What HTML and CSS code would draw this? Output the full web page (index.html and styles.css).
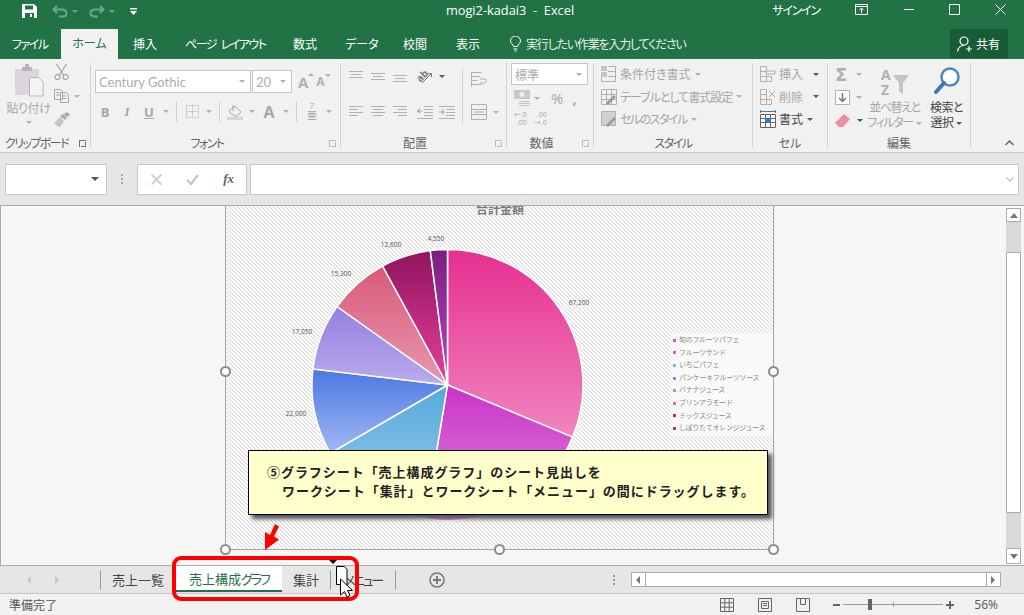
FILE: index.html
```html
<!DOCTYPE html>
<html lang="ja">
	<head>
		<meta charset="UTF-8" />
		<title>mogi2-kadai3 - Excel</title>
		<link rel="stylesheet" href="styles.css">
	</head>
	<body>
		<!-- icons -->
		<svg class="defs" width="0" height="0">
			<symbol id="i-top" viewBox="0 0 14 14"><path d="M0 2.5h14M2 5.5h10M0 8.5h14" /></symbol>
			<symbol id="i-mid" viewBox="0 0 14 14"><path d="M0 4.5h14M2 7.5h10M0 10.5h14" /></symbol>
			<symbol id="i-bot" viewBox="0 0 14 14"><path d="M0 6.5h14M2 9.5h10M0 12.5h14" /></symbol>
			<symbol id="i-left" viewBox="0 0 14 14"><path d="M0 1.5h14M0 4.5h9M0 7.5h14M0 10.5h9" /></symbol>
			<symbol id="i-center" viewBox="0 0 14 14"><path d="M0 1.5h14M2 4.5h10M0 7.5h14M2 10.5h10" /></symbol>
			<symbol id="i-right" viewBox="0 0 14 14"><path d="M0 1.5h14M5 4.5h9M0 7.5h14M5 10.5h9" /></symbol>
			<symbol id="i-outdent" viewBox="0 0 16 14"><path d="M7 1.5h9M7 4.5h9M7 7.5h9M7 10.5h9M0 13.5h16M0 6h6" /><path class="fill" d="M0 6l3-3v6z" /></symbol>
			<symbol id="i-indent" viewBox="0 0 16 14"><path d="M0 1.5h16M7 4.5h9M7 7.5h9M7 10.5h9M0 13.5h16M0 7h5" /><path class="fill" d="M6 7l-3-3v6z" /></symbol>
			<symbol id="i-table" viewBox="0 0 16 16"><path d="M.5.5h15v15H.5zM.5 5.5h15M.5 10.5h15M5.5.5v15M10.5.5v15" /></symbol>
		</svg>

		<div class="titlebar">
			<div class="qat">
				<svg class="qat-save" width="15" height="14" viewBox="0 0 15 14"><path fill="#fff" d="M0 0h12l3 3v11H0z" /><path fill="#217346" d="M3 1.5h8v4H3zM3 9h9v5H3z" /><path fill="#fff" d="M8 10h2v3H8z" /></svg>
				<svg class="qat-undo" width="16" height="13" viewBox="0 0 16 13"><path fill="none" stroke="#6fa58a" stroke-width="2" d="M5 1L1.500 4.500 5 8M2 4.500h8q4.500 0 4.500 3.500T10 11.500H7" /></svg>
				<span class="qat-caret"></span>
				<svg class="qat-undo" width="16" height="13" viewBox="0 0 16 13"><path fill="none" stroke="#6fa58a" stroke-width="2" d="M11 1l3.500 3.500L11 8M14 4.500H6Q1.500 4.500 1.500 8T6 11.500h3" /></svg>
				<span class="qat-caret"></span>
				<svg class="qat-more" width="7" height="7" viewBox="0 0 7 7"><path fill="#fff" d="M0 0h7v1.500H0zM0 3h7L3.500 7z" /></svg>
			</div>
			<div class="doc-title">mogi2-kadai3&nbsp; - &nbsp;Excel</div>
			<div class="win">
				<span class="signin">サインイン</span>
				<svg class="win-ribbon" width="13" height="11" viewBox="0 0 13 11"><path fill="none" stroke="#fff" d="M.5.5h12v10H.5zM.5 2.500h12M6.500 9V4.500M4.500 6l2-2 2 2" /></svg>
				<svg class="win-min" width="11" height="11" viewBox="0 0 11 11"><path stroke="#fff" d="M0 5.500h10" /></svg>
				<svg class="win-max" width="11" height="11" viewBox="0 0 11 11"><path fill="none" stroke="#fff" d="M.5.5h10v10H.5z" /></svg>
				<svg class="win-close" width="11" height="11" viewBox="0 0 11 11"><path stroke="#fff" d="M.5.500l10 10M10.500.500l-10 10" /></svg>
			</div>
		</div>

		<div class="tabs">
			<span class="tab tab-file">ファイル</span>
			<span class="tab tab-home">ホーム</span>
			<span class="tab tab-ins">挿入</span>
			<span class="tab tab-page">ページ レイアウト</span>
			<span class="tab tab-form">数式</span>
			<span class="tab tab-data">データ</span>
			<span class="tab tab-rev">校閲</span>
			<span class="tab tab-view">表示</span>
			<svg class="bulb" width="11" height="16" viewBox="0 0 11 16"><path fill="none" stroke="#fff" d="M3.500 10.500C3 8 .5 7.500.5 5a5 5 0 0 1 10 0c0 2.500-2.500 3-3 5.500zM3.500 13h4M4.500 15h2" /></svg>
			<span class="tell">実行したい作業を入力してください</span>
			<span class="share">
				<svg width="16" height="16" viewBox="0 0 16 16"><path fill="none" stroke="#fff" stroke-width="1.200" d="M7 1a3.800 3.800 0 0 1 0 8 3.800 3.800 0 0 1 0-8zM.6 15.500C1 12 3.500 9.500 7 9.500M9 13h6M12 10v6" /></svg>
				共有
			</span>
		</div>

		<div class="ribbon">
			<section class="group g-clip">
				<div class="body">
					<div class="paste">
						<svg width="30" height="33" viewBox="0 0 30 33"><path fill="#dcd6dc" d="M1 5h24v26H1z" /><path fill="#b9b3b9" d="M8 3h3V0h4v3h3v4H8z" /><path fill="#f4f4f4" stroke="#b5b5b5" d="M15.500 13.500h9l4.500 4.500v14H15.500z" /></svg>
						<span class="dim">貼り付け</span>
						<span class="caret caret-paste"></span>
					</div>
					<div class="clip-tools">
						<svg width="15" height="16" viewBox="0 0 15 16"><path fill="none" stroke="#a8a8a8" stroke-width="1.300" d="M2.500 0l7 11M12.500 0l-7 11M3.500 10.500a2.500 2.500 0 1 0 .1 0zM11.500 10.500a2.500 2.500 0 1 0 .1 0z" /></svg>
						<span class="row">
							<svg width="15" height="14" viewBox="0 0 15 14"><path fill="none" stroke="#a8a8a8" d="M.5.5h6l2 2v8H.5zM6.500 3.500h6l2 2v8h-8zM2 3.500h3M2 6h4M8.500 7h4M8.500 9.500h4" /></svg>
							<span class="caret caret-copy"></span>
						</span>
						<svg width="16" height="15" viewBox="0 0 16 15"><path fill="#c9c3c9" d="M0 11l6-6 4 4-4 6-3-1z" /><path fill="#a8a8a8" d="M6 4l3-2 4 4-2 2zM10 2l3-2 3 3-3 2z" /></svg>
					</div>
				</div>
				<div class="label has-launcher kana">クリップボード<span class="launcher launcher-dark"></span></div>
			</section>

			<section class="group g-font">
				<div class="body body-col">
					<div class="row font-row">
						<span class="combo combo-font">Century Gothic<i class="caret"></i></span>
						<span class="combo combo-size">20<i class="caret"></i></span>
						<span class="big-a a-up">A<i class="tri tri-up"></i></span>
						<span class="big-a a-down">A<i class="tri tri-down"></i></span>
					</div>
					<div class="row font-tools">
						<span class="tool t-b">B</span>
						<span class="tool t-i">I</span>
						<span class="tool t-u">U</span>
						<span class="cell"><i class="caret"></i></span>
						<span class="vsep"></span>
						<span class="tool"><svg width="13" height="13" viewBox="0 0 13 13"><path fill="none" stroke="#b0b0b0" stroke-dasharray="1 1" d="M.5.500h12v12H.5zM.5 6.500h12M6.500.500v12" /></svg></span>
						<span class="cell"><i class="caret"></i></span>
						<span class="vsep"></span>
						<span class="tool"><svg width="17" height="16" viewBox="0 0 17 16"><path fill="none" stroke="#a8a8a8" d="M2 7l6-5 6 6-4 4q-1 1-2 0L3 9zM6 1v6" /><path fill="#d9d4d9" d="M0 13h16v3H0z" /></svg></span>
						<span class="cell"><i class="caret"></i></span>
						<span class="tool t-a">A</span>
						<span class="cell"><i class="caret"></i></span>
						<span class="vsep"></span>
						<span class="tool t-phon">ア<b>亜</b></span>
						<span class="cell"><i class="caret"></i></span>
					</div>
				</div>
				<div class="label has-launcher kana">フォント<span class="launcher"></span></div>
			</section>

			<section class="group g-align">
				<div class="body">
					<div class="align-main">
						<div class="row align-top">
							<span class="tool"><svg class="ln" width="14" height="14"><use href="#i-top" /></svg></span>
							<span class="tool"><svg class="ln" width="14" height="14"><use href="#i-mid" /></svg></span>
							<span class="tool"><svg class="ln" width="14" height="14"><use href="#i-bot" /></svg></span>
							<span class="tool tool-gap"><svg class="open" width="16" height="16" viewBox="0 0 16 16"><text class="orient" transform="rotate(-45 6 9)" x="0" y="11">ab</text><path fill="none" stroke="#777" d="M5 15l9-9M11 5.500h3.500V9" /></svg></span>
							<span class="cell"><i class="caret caret-dark"></i></span>
						</div>
						<div class="row">
							<span class="tool"><svg class="ln" width="14" height="14"><use href="#i-left" /></svg></span>
							<span class="tool"><svg class="ln" width="14" height="14"><use href="#i-center" /></svg></span>
							<span class="tool"><svg class="ln" width="14" height="14"><use href="#i-right" /></svg></span>
							<span class="tool tool-gap"><svg class="ln" width="16" height="14"><use href="#i-outdent" /></svg></span>
							<span class="tool"><svg class="ln" width="16" height="14"><use href="#i-indent" /></svg></span>
						</div>
					</div>
					<span class="vsep vsep-tall"></span>
					<div class="align-side">
						<svg width="16" height="15" viewBox="0 0 16 15"><path fill="none" stroke="#b0b0b0" d="M.5.500h10M.5 4.500h9M.5 8.500h6M.5 12.500h10M.5.500v14M9 7h5q2 0 1 3l-1 1H9" /></svg>
						<span class="row">
							<svg width="16" height="16" viewBox="0 0 16 16"><path fill="none" stroke="#b0b0b0" d="M.5.500h15v15H.5zM.5 5.500h15M.5 10.500h15M3 8h10" /></svg>
							<span class="caret caret-merge"></span>
						</span>
					</div>
				</div>
				<div class="label has-launcher">配置<span class="launcher"></span></div>
			</section>

			<section class="group g-num">
				<div class="body body-col">
					<span class="combo combo-num">標準<i class="caret"></i></span>
					<div class="row num-row">
						<svg width="16" height="17" viewBox="0 0 16 17"><path fill="#c9c9c9" d="M0 0h16v9H0z" /><circle cx="8" cy="4.500" r="2.500" fill="#f1f1f1" /><path fill="none" stroke="#c4c4c4" d="M5 11.500h11M5 13.500h11M5 15.500h11" /></svg>
						<span class="caret caret-cur"></span>
						<span class="num-pct">%</span>
						<span class="num-comma">,</span>
					</div>
					<div class="row dec-row">
						<span class="dec">←.0<br>.00</span>
						<span class="dec">.00<br>→.0</span>
					</div>
				</div>
				<div class="label has-launcher">数値<span class="launcher"></span></div>
			</section>

			<section class="group g-style">
				<div class="body body-col">
					<div class="line"><svg width="16" height="16" viewBox="0 0 16 16"><path fill="#c4c4c4" d="M0 0h6v5H0zM0 6h6v5H0z" /><path fill="none" stroke="#b0b0b0" d="M7.500.500h7v15h-14v-4M7 5.500h8M7 10.500h8" /></svg><span class="dim">条件付き書式</span><i class="caret"></i></div>
					<div class="line"><svg width="16" height="16" viewBox="0 0 16 16"><use href="#i-table" class="ln" /><path fill="#9a9a9a" d="M5 14L13 6l2 2-8 8z" /></svg><span class="dim tight">テーブルとして書式設定</span><i class="caret"></i></div>
					<div class="line"><svg width="16" height="16" viewBox="0 0 16 16"><path fill="#d0d0d0" stroke="#b0b0b0" d="M.5.500h14v14H.5z" /><path fill="#9a9a9a" d="M5 14L13 6l2 2-8 8z" /></svg><span class="dim kana">セルのスタイル</span><i class="caret"></i></div>
				</div>
				<div class="label kana">スタイル</div>
			</section>

			<section class="group g-cell">
				<div class="body body-col">
					<div class="line"><svg width="16" height="16" viewBox="0 0 16 16"><path fill="none" stroke="#b0b0b0" d="M.5.500h6v5h-6zM.5 5.500h6v5h-6zM.5 10.500h6v5h-6zM6.500 10.500h5v5h-5zM6 5h9v3H6z" /></svg><span class="dim">挿入</span><i class="caret caret-dark caret-end"></i></div>
					<div class="line"><svg width="16" height="16" viewBox="0 0 16 16"><path fill="none" stroke="#b0b0b0" d="M.5.500h6v5h-6zM.5 5.500h6v5h-6zM.5 10.500h6v5h-6zM6.500 10.500h5v5h-5zM9 2l6 6M15 2l-6 6" /></svg><span class="dim">削除</span><i class="caret caret-dark caret-end"></i></div>
					<div class="line"><svg width="16" height="18" viewBox="0 0 16 18"><path fill="#fff" stroke="#666" d="M.5 4.500h15v13H.5zM.5 8.500h15M.5 12.500h15M5.500 4.500v13M10.500 4.500v13" /><path fill="#3a78c2" d="M5 8h6v5H5z" /><path stroke="#3a78c2" d="M0 1.500h16M.5 0v3M15.500 0v3" /></svg><span class="dark">書式</span><i class="caret caret-dark"></i></div>
				</div>
				<div class="label">セル</div>
			</section>

			<section class="group g-edit">
				<div class="body">
					<div class="edit-small">
						<span class="row"><span class="sigma">Σ</span><i class="caret"></i></span>
						<span class="row"><svg width="15" height="15" viewBox="0 0 15 15"><path fill="#fff" stroke="#b0b0b0" d="M.5.500h14v14H.5z" /><path fill="none" stroke="#777" stroke-width="1.500" d="M7.500 3v8M4 8l3.500 3.500L11 8" /></svg><i class="caret"></i></span>
						<span class="row"><svg width="15" height="13" viewBox="0 0 15 13"><path fill="#ec8ea2" d="M9 0l6 5-7 8H4L0 9z" /></svg><i class="caret caret-dark caret-erase"></i></span>
					</div>
					<div class="big sort">
						<svg class="open" width="30" height="30" viewBox="0 0 30 30"><text class="sort-a" x="1" y="13">A</text><text class="sort-a" x="1" y="28">Z</text><path fill="#c4c4c4" d="M13 8h16l-6 8v11l-4-3v-8z" /></svg>
						<span class="dim">並べ替えと</span>
						<span class="dim">フィルター<i class="caret"></i></span>
					</div>
					<div class="big find">
						<svg width="28" height="30" viewBox="0 0 28 30"><circle cx="17" cy="10" r="8.500" fill="#fff" stroke="#4f86c0" stroke-width="2.500" /><path stroke="#3c76b5" stroke-width="4" stroke-linecap="round" d="M11 16l-8 9" /></svg>
						<span class="dark">検索と</span>
						<span class="dark">選択<i class="caret caret-dark"></i></span>
					</div>
				</div>
				<div class="label">編集</div>
			</section>

			<svg class="collapse" width="9" height="6" viewBox="0 0 9 6"><path fill="none" stroke="#666" stroke-width="1.500" d="M.5 5l4-4 4 4" /></svg>
		</div>

		<div class="formula">
			<div class="namebox"><i class="caret caret-dark"></i></div>
			<span class="grip"></span>
			<div class="fx-btns">
				<svg width="11" height="11" viewBox="0 0 11 11"><path stroke="#c4c4c4" stroke-width="1.500" d="M.5.500l10 10M10.500.500l-10 10" /></svg>
				<svg width="13" height="11" viewBox="0 0 13 11"><path fill="none" stroke="#c4c4c4" stroke-width="2.200" d="M1 6l4 4 7-9" /></svg>
				<span class="fx">fx</span>
			</div>
			<div class="fx-input"><svg width="8" height="5" viewBox="0 0 8 5"><path fill="none" stroke="#c4c4c4" stroke-width="1.500" d="M.5.500L4 4 7.500.500" /></svg></div>
		</div>

		<main class="sheet">
			<div class="chart">
				<svg class="pie" width="547" height="344" viewBox="0 0 547 344">
					<defs>
						<linearGradient id="s1" x2="0" y2="1"><stop offset="0" stop-color="#e62f90" /><stop offset="1" stop-color="#f186bf" /></linearGradient>
						<linearGradient id="s2" x2="0" y2="1"><stop offset="0" stop-color="#cb33c8" /><stop offset="1" stop-color="#dd85de" /></linearGradient>
						<linearGradient id="s3" x2="0" y2="1"><stop offset="0" stop-color="#56a9da" /><stop offset="1" stop-color="#9ccfee" /></linearGradient>
						<linearGradient id="s4" x2="0" y2="1"><stop offset="0" stop-color="#4a78e4" /><stop offset="1" stop-color="#a2b8f2" /></linearGradient>
						<linearGradient id="s5" x2="0" y2="1"><stop offset="0" stop-color="#957fe0" /><stop offset="1" stop-color="#b9aceb" /></linearGradient>
						<linearGradient id="s6" x2="0" y2="1"><stop offset="0" stop-color="#d9597b" /><stop offset="1" stop-color="#e799af" /></linearGradient>
						<linearGradient id="s7" x2="0" y2="1"><stop offset="0" stop-color="#8f155f" /><stop offset="1" stop-color="#e6409c" /></linearGradient>
						<linearGradient id="s8" x2="0" y2="1"><stop offset="0" stop-color="#78207e" /><stop offset="1" stop-color="#c23fc4" /></linearGradient>
					</defs>
					<text class="chart-title" x="274" y="9">合計金額</text>
					<g class="slices">
						<path fill="url(#s1)" d="M221.500 180V44.500A135.500 135.500 0 0 1 346.600 232.100z" />
						<path fill="url(#s2)" d="M221.500 180L346.600 232.100A135.500 135.500 0 0 1 199.400 313.700z" />
						<path fill="url(#s3)" d="M221.500 180L199.400 313.700A135.500 135.500 0 0 1 104.400 248.200z" />
						<path fill="url(#s4)" d="M221.500 180L104.400 248.200A135.500 135.500 0 0 1 86.950 163.960z" />
						<path fill="url(#s5)" d="M221.500 180L86.950 163.960A135.500 135.500 0 0 1 111.050 101.500z" />
						<path fill="url(#s6)" d="M221.500 180L111.050 101.500A135.500 135.500 0 0 1 156.600 61z" />
						<path fill="url(#s7)" d="M221.500 180L156.600 61A135.500 135.500 0 0 1 204.300 45.600z" />
						<path fill="url(#s8)" d="M221.500 180L204.300 45.600A135.500 135.500 0 0 1 221.500 44.500z" />
					</g>
					<g class="values">
						<text x="353" y="100">67,200</text>
						<text x="210" y="36">4,550</text>
						<text x="165" y="42">12,600</text>
						<text x="115" y="71">15,300</text>
						<text x="76" y="129">17,050</text>
						<text x="70" y="211">22,000</text>
					</g>
				</svg>
				<ul class="legend">
					<li><i class="k1"></i>旬のフルーツパフェ</li>
					<li><i class="k2"></i>フルーツサンド</li>
					<li><i class="k3"></i>いちごパフェ</li>
					<li><i class="k4"></i>パンケーキフルーツソース</li>
					<li><i class="k5"></i>バナナジュース</li>
					<li><i class="k6"></i>プリンアラモード</li>
					<li><i class="k7"></i>ミックスジュース</li>
					<li><i class="k8"></i>しぼりたてオレンジジュース</li>
				</ul>
			</div>
			<span class="handle h-l"></span>
			<span class="handle h-r"></span>
			<span class="handle h-bl"></span>
			<span class="handle h-b"></span>
			<span class="handle h-br"></span>

			<div class="callout">
				<p>⑤グラフシート「売上構成グラフ」のシート見出しを</p>
				<p class="indent">ワークシート「集計」とワークシート「メニュー」の間にドラッグします。</p>
			</div>

			<svg class="arrow" width="16" height="26" viewBox="0 0 16 26"><path fill="#f00" d="M11 0l4 2.500-5 10 5 3L1 26 1 8l5 3z" /></svg>

			<div class="vscroll">
				<span class="sb-btn"><i class="tri-btn-up"></i></span>
				<span class="sb-thumb"></span>
				<span class="sb-btn sb-down"><i class="tri-btn-down"></i></span>
			</div>
		</main>

		<div class="sheetbar">
			<span class="nav">
				<i class="nav-l"></i>
				<i class="nav-r"></i>
			</span>
			<span class="vsep vsep-sheet"></span>
			<span class="sheet-tab">売上一覧</span>
			<span class="sheet-tab active">売上構成<span class="tab-kana">グラフ</span></span>
			<span class="sheet-tab">集計</span>
			<span class="vsep vsep-sheet"></span>
			<span class="sheet-tab tab-menu"><span class="tab-kana">メニュー</span></span>
			<span class="vsep vsep-sheet"></span>
			<svg class="add" width="16" height="16" viewBox="0 0 16 16"><circle cx="8" cy="8" r="7" fill="none" stroke="#777" stroke-width="1.500" /><path stroke="#777" stroke-width="1.800" d="M8 4v8M4 8h8" /></svg>
			<span class="dots"></span>
			<div class="hscroll">
				<span class="hs-btn"><i class="nav-l nav-dark"></i></span>
				<span class="hs-thumb"></span>
				<span class="hs-btn"><i class="nav-r nav-dark"></i></span>
			</div>
		</div>

		<footer class="status">
			<span>準備完了</span>
			<div class="status-right">
				<svg width="14" height="14" viewBox="0 0 14 14"><path fill="none" stroke="#666" d="M.5.500h13v13H.5zM.5 4.800h13M.5 9.200h13M4.800.500v13M9.200.500v13" /></svg>
				<svg width="14" height="14" viewBox="0 0 14 14"><path fill="none" stroke="#666" d="M.5.500h13v13H.5zM3.500 3.500h7v7h-7zM5 5.500h4M5 7.500h4" /></svg>
				<svg width="14" height="14" viewBox="0 0 14 14"><path fill="none" stroke="#666" d="M.5.500h13v13H.5zM4.500.500v6h5v-6" /></svg>
				<div class="zoom">
					<b class="z-minus"></b>
					<span class="z-track"><i class="z-thumb"></i><i class="z-tick"></i></span>
					<b class="z-plus"></b>
				</div>
				<span class="z-val">56%</span>
			</div>
		</footer>

		<!-- drag overlay -->
		<div class="redbox"></div>
		<span class="drop-mark"></span>
		<svg class="cursor" width="20" height="32" viewBox="0 0 20 32">
			<path fill="#fff" stroke="#000" d="M1.500.500h8l2.500 3v15h-10.500z" />
			<path fill="#fff" stroke="#000" d="M5.500 13v16l4-3.500 2.500 5.500 3-1.500-2.500-5h5z" />
		</svg>
	</body>
</html>
```

FILE: styles.css
```css
* {
	margin: 0;
	padding: 0;
	box-sizing: border-box;
	list-style: none;
}

html,
body {
	width: 1024px;
	height: 615px;
	overflow: hidden;
}

body {
	position: relative;
	display: flex;
	flex-direction: column;
	font-family: "Open Sans", "Noto Sans CJK JP", sans-serif;
	font-size: 12px;
	font-feature-settings: "palt";
	background: #f1f1f1;
	color: #444;
}

i {
	font-style: normal;
}

.defs {
	position: absolute;
}

.open {
	overflow: visible;
}

.row {
	display: flex;
	align-items: center;
}

.kana {
	letter-spacing: -1.500px;
}

.tight {
	letter-spacing: -1px;
}

/* タイトルバー */
.titlebar {
	display: grid;
	grid-template-columns: 1fr auto 1fr;
	height: 29px;
	padding-bottom: 7px;
	background: #217346;
	color: #fff;
	align-items: center;
}

.qat {
	display: flex;
	align-items: center;
	padding-left: 22px;
}

.qat-undo {
	margin-left: 15px;
}

.qat-caret {
	width: 0;
	height: 0;
	margin-left: 4px;
	border: 3px solid transparent;
	border-top: 3px solid #6fa58a;
	border-bottom: 0;
}

.qat-undo + .qat-caret + .qat-undo {
	margin-left: 11px;
}

.qat-more {
	margin-left: 15px;
}

.doc-title {
	margin: -2px 4px 0 0;
	font-size: 12.800px;
}

.win {
	display: flex;
	align-items: center;
	justify-content: flex-end;
	margin-top: -3px;
	padding-right: 18px;
}

.signin {
	margin-right: 35px;
	letter-spacing: -1.200px;
}

.win-min {
	margin-left: 36px;
}

.win-max {
	margin-left: 34px;
}

.win-close {
	margin-left: 35px;
}

/* タブ */
.tabs {
	display: flex;
	align-items: center;
	height: 30px;
	background: #217346;
	color: #fff;
	position: relative;
}

.tab {
	flex: none;
}

.tab-file {
	margin-left: 12px;
	width: 49px;
	letter-spacing: -1.500px;
}

.tab-home {
	width: 57px;
	height: 30px;
	line-height: 30px;
	text-align: center;
	background: #f1f1f1;
	color: #217346;
}

.tab-ins {
	margin-left: 15px;
	width: 52px;
}

.tab-page {
	width: 108px;
	letter-spacing: -1.500px;
	word-spacing: 3px;
}

.tab-form {
	width: 52px;
}

.tab-data {
	width: 58px;
}

.tab-rev {
	width: 53px;
}

.tab-view {
	width: 54px;
}

.bulb {
	margin-right: 5px;
}

.tell {
	color: #e6f0ea;
	letter-spacing: -1.200px;
}

.share {
	display: flex;
	align-items: center;
	gap: 3px;
	position: absolute;
	left: 950px;
	top: 0;
	width: 58px;
	height: 29px;
	padding-left: 7px;
	background: #185c37;
}

/* リボン */
.ribbon {
	display: flex;
	height: 94px;
	padding-top: 4px;
	background: #f1f1f1;
	border-bottom: 1px solid #c6c6c6;
	position: relative;
}

.group {
	display: flex;
	flex-direction: column;
	flex: none;
	height: 85px;
	border-right: 1px solid #d4d4d4;
	position: relative;
}

.body {
	display: flex;
	flex: none;
	height: 73px;
}

.body-col {
	flex-direction: column;
}

.label {
	position: relative;
	height: 12px;
	line-height: 15px;
	text-align: center;
	color: #666;
}

.has-launcher {
	padding-right: 17px;
}

.launcher {
	position: absolute;
	right: 4px;
	top: 4px;
	width: 7px;
	height: 7px;
	border: solid #bbb;
	border-width: 1px 0 0 1px;
}

.launcher::after {
	content: "";
	position: absolute;
	right: 0;
	bottom: 0;
	width: 4px;
	height: 4px;
	border: solid #bbb;
	border-width: 0 1px 1px 0;
}

.launcher-dark,
.launcher-dark::after {
	border-color: #777;
}

.dim {
	color: #a6a6a6;
}

.dark {
	color: #444;
}

.caret {
	display: inline-block;
	width: 0;
	height: 0;
	border: 3px solid transparent;
	border-top: 3px solid #b0b0b0;
	border-bottom: 0;
}

.caret-dark {
	border-top-color: #555;
}

.tool {
	display: flex;
	flex: none;
	align-items: center;
	justify-content: center;
	width: 22px;
	height: 18px;
	color: #a6a6a6;
}

.tool-gap {
	margin-left: 3px;
}

.cell {
	display: flex;
	flex: none;
	align-items: center;
	justify-content: center;
	width: 12px;
}

.vsep {
	flex: none;
	width: 1px;
	height: 21px;
	margin: 0 4px;
	background: #d0d0d0;
}

.ln {
	fill: none;
	stroke: #b0b0b0;
}

.ln .fill,
.fill {
	fill: #b0b0b0;
	stroke: none;
}

/* クリップボード */
.g-clip {
	width: 91px;
}

.paste {
	display: flex;
	flex-direction: column;
	align-items: center;
	width: 54px;
	padding: 1px 0 0 3px;
}

.paste .dim {
	margin-top: 3px;
	line-height: 17px;
	letter-spacing: -0.400px;
}

.caret-paste {
	margin-top: 4px;
}

.clip-tools {
	display: flex;
	flex-direction: column;
	gap: 9px;
	padding-top: 1px;
}

.caret-copy {
	margin-left: 5px;
}

/* フォント */
.g-font {
	width: 250px;
}

.g-font .body {
	padding-left: 3px;
}

.font-row {
	margin: 7px 0 0 1px;
}

.combo {
	position: relative;
	display: flex;
	align-items: center;
	height: 23px;
	padding-left: 3px;
	background: #fff;
	border: 1px solid #c6c6c6;
	color: #b0a8b0;
	font-family: "Lato", "Noto Sans CJK JP", sans-serif;
	font-size: 13px;
}

.combo .caret {
	position: absolute;
	right: 5px;
	top: 9px;
}

.combo-font {
	width: 156px;
}

.combo-size {
	width: 40px;
	margin-left: 1px;
}

.big-a {
	position: relative;
	flex: none;
	font-size: 14px;
	font-weight: 700;
	color: #b0b0b0;
}

.a-up {
	margin-left: 6px;
	font-size: 15px;
}

.a-down {
	margin-left: 8px;
	font-size: 12px;
}

.tri {
	position: absolute;
	top: 1px;
	left: 100%;
	width: 0;
	height: 0;
	border: 3px solid transparent;
}

.tri-up {
	border-top: 0;
	border-bottom: 3px solid #b0b0b0;
}

.tri-down {
	border-bottom: 0;
	border-top: 3px solid #b0b0b0;
}

.font-tools {
	margin-top: 8px;
}

.t-b {
	font-weight: 700;
	font-size: 13px;
}

.t-i {
	font-style: italic;
	font-weight: 600;
	font-size: 13px;
	font-family: "Liberation Serif", serif;
}

.t-u {
	font-weight: 700;
	font-size: 13px;
	text-decoration: underline;
}

.t-a {
	font-weight: 700;
	font-size: 16px;
}

.t-phon {
	flex-direction: column;
	font-size: 6px;
	line-height: 7px;
}

.t-phon b {
	font-size: 10px;
	font-weight: 400;
	line-height: 11px;
}

/* 配置 */
.g-align {
	width: 166px;
}

.g-align .body {
	padding-left: 4px;
}

.align-main {
	width: 113px;
}

.align-top {
	margin: 4px 0 18px;
}

.orient {
	font-size: 10px;
	font-weight: 700;
	fill: #777;
}

.vsep-tall {
	height: 55px;
	margin: 6px 8px 0 4px;
}

.align-side {
	display: flex;
	flex-direction: column;
	gap: 21px;
	padding-top: 9px;
}

.align-side .row {
	margin-top: -4px;
}

.caret-merge {
	margin-left: 6px;
}

/* 数値 */
.g-num {
	width: 87px;
}

.g-num .body {
	padding-left: 4px;
}

.combo-num {
	width: 77px;
	height: 22px;
	flex: none;
	font-size: 12px;
}

.num-row {
	margin: 4px 0 0 3px;
	height: 18px;
}

.caret-cur {
	margin: 0 11px 0 4px;
}

.num-pct {
	font-size: 15px;
	color: #a6a6a6;
}

.num-comma {
	margin-left: 9px;
	font-size: 15px;
	font-weight: 700;
	color: #a6a6a6;
	line-height: 12px;
}

.dec-row {
	gap: 7px;
	margin: 4px 0 0 3px;
}

.dec {
	font-size: 7px;
	line-height: 8px;
	color: #a6a6a6;
	text-align: right;
}

/* スタイル・セル */
.g-style {
	width: 159px;
}

.g-style .body,
.g-cell .body {
	padding-left: 7px;
}

.g-cell {
	width: 75px;
}

.line {
	display: flex;
	align-items: center;
	flex: none;
	height: 22.500px;
	white-space: nowrap;
}

.line svg {
	flex: none;
	margin-right: 3px;
}

.line .caret {
	margin-left: 4px;
}

.line .caret-end {
	margin-left: 10px;
}

.g-style .line svg .ln,
.g-style use {
	fill: none;
	stroke: #b0b0b0;
}

/* 編集 */
.g-edit {
	width: 143px;
}

.g-edit .body {
	padding-left: 7px;
}

.edit-small {
	display: flex;
	flex-direction: column;
	width: 35px;
}

.edit-small .row {
	gap: 6px;
	height: 23px;
}

.sigma {
	width: 15px;
	font-size: 18px;
	font-weight: 700;
	line-height: 20px;
	color: #b0b0b0;
	font-family: "DejaVu Sans", sans-serif;
}

.caret-erase {
	margin-left: 1px;
}

.big {
	display: flex;
	flex-direction: column;
	align-items: center;
	line-height: 15px;
	white-space: nowrap;
	padding-top: 4px;
}

.big svg {
	margin-bottom: 3px;
}

.big .caret {
	margin-left: 3px;
	vertical-align: middle;
}

.sort {
	width: 55px;
	margin-left: -3px;
	letter-spacing: -1.400px;
}

.find {
	width: 37px;
	margin-left: 6px;
	letter-spacing: -0.600px;
}

.sort-a {
	font-size: 14px;
	font-weight: 700;
	fill: #b0b0b0;
}

.collapse {
	position: absolute;
	left: 1005px;
	top: 81px;
}

/* 数式バー */
.formula {
	display: flex;
	align-items: center;
	gap: 0;
	height: 53px;
	padding: 0 5px;
	background: #e6e6e6;
	border-bottom: 1px solid #ababab;
}

.namebox,
.fx-btns,
.fx-input {
	display: flex;
	align-items: center;
	height: 31px;
	background: #fff;
	border: 1px solid #c6c6c6;
}

.namebox {
	justify-content: flex-end;
	width: 102px;
	padding-right: 7px;
}

.namebox .caret {
	border-width: 4px;
	border-bottom: 0;
}

.grip {
	width: 2px;
	height: 10px;
	margin: 0 14px 0 14px;
	border-left: 2px dotted #aaa;
}

.fx-btns {
	justify-content: space-between;
	width: 110px;
	padding: 0 12px 0 13px;
}

.fx {
	font-family: "Liberation Serif", serif;
	font-size: 13px;
	font-weight: 700;
	font-style: italic;
	color: #666;
}

.fx-input {
	justify-content: flex-end;
	width: 769px;
	margin-left: 3px;
	padding-right: 4px;
}

/* シート */
.sheet {
	position: relative;
	flex: none;
	height: 360px;
	background: #f6f6f6;
	border-left: 1px solid #ababab;
	border-bottom: 1px solid #ababab;
	overflow: hidden;
}

.chart {
	position: absolute;
	left: 224px;
	top: -1px;
	width: 549px;
	height: 345px;
	background: repeating-linear-gradient(45deg, #e4e4e4 0 1.410px, #fff 1.410px 2.830px);
	border: solid #a6a6a6;
	border-width: 0 1px 1px 1px;
}

.pie {
	display: block;
}

.chart-title {
	font-size: 12px;
	font-weight: 700;
	fill: #7a7a7a;
	text-anchor: middle;
}

.slices path {
	stroke: #fff;
	stroke-width: 1.500;
}

.values text {
	font-size: 6.500px;
	fill: #555;
	text-anchor: middle;
}

.legend {
	position: absolute;
	left: 444px;
	top: 128px;
	width: 103px;
	height: 103px;
	padding-top: 1px;
	background: rgba(255, 255, 255, 0.600);
	font-size: 7px;
	line-height: 12.600px;
	letter-spacing: -0.300px;
	color: #8a8a8a;
	font-feature-settings: normal;
	white-space: nowrap;
}

.legend li {
	display: flex;
	align-items: center;
	gap: 3px;
	padding-left: 3px;
}

.legend i {
	width: 3px;
	height: 3px;
}

.k1 { background: #e65aa8; }
.k2 { background: #d560d8; }
.k3 { background: #74bbe4; }
.k4 { background: #6f92ea; }
.k5 { background: #a594e6; }
.k6 { background: #df6f92; }
.k7 { background: #c02a84; }
.k8 { background: #a632a8; }

.handle {
	position: absolute;
	width: 11px;
	height: 11px;
	background: #fff;
	border: 2px solid #8c8c8c;
	border-radius: 50%;
}

.h-l { left: 219px; top: 160px; }
.h-r { left: 767px; top: 160px; }
.h-bl { left: 219px; top: 338px; }
.h-b { left: 493px; top: 338px; }
.h-br { left: 767px; top: 338px; }

.callout {
	position: absolute;
	left: 247px;
	top: 244px;
	width: 520px;
	height: 65px;
	padding: 12px 0 0 18px;
	background: #ffc;
	border: 1px solid #000;
	box-shadow: 4px 4px 4px #555;
	font-size: 13px;
	font-weight: 700;
	line-height: 19px;
	letter-spacing: 0.950px;
	color: #222;
	font-feature-settings: normal;
	white-space: nowrap;
}

.indent {
	padding-left: 15px;
}

.arrow {
	position: absolute;
	left: 263px;
	top: 318px;
}

.vscroll {
	position: absolute;
	right: 3px;
	top: 2px;
	bottom: 1px;
	display: flex;
	flex-direction: column;
	width: 15px;
	background: #d9d9d9;
}

.sb-btn {
	display: flex;
	align-items: center;
	justify-content: center;
	flex: none;
	height: 14px;
	background: #fff;
	border: 1px solid #ababab;
}

.sb-thumb {
	flex: none;
	height: 261px;
	margin-top: 30px;
	background: #fff;
	border: 1px solid #ababab;
}

.sb-down {
	height: 16px;
	margin-top: auto;
}

.tri-btn-up,
.tri-btn-down {
	width: 0;
	height: 0;
	border: 4px solid transparent;
}

.tri-btn-up {
	border-top: 0;
	border-bottom: 5px solid #777;
}

.tri-btn-down {
	border-bottom: 0;
	border-top: 5px solid #777;
}

/* シート見出し */
.sheetbar {
	display: flex;
	align-items: center;
	flex: none;
	height: 28px;
	background: #e6e6e6;
	border-bottom: 1px solid #c6c6c6;
	position: relative;
}

.nav {
	display: flex;
	align-items: center;
	gap: 24px;
	padding-left: 27px;
	width: 100px;
}

.nav-l,
.nav-r {
	width: 0;
	height: 0;
	border: 4px solid transparent;
}

.nav-l {
	border-left: 0;
	border-right: 4px solid #c6c6c6;
}

.nav-r {
	border-right: 0;
	border-left: 4px solid #c6c6c6;
}

.nav-dark {
	border-left-color: #777;
	border-right-color: #777;
}

.vsep-sheet {
	height: 20px;
	margin: 0;
	background: #999;
}

.sheet-tab {
	height: 26px;
	line-height: 26px;
	padding: 0 11px;
	font-size: 13px;
	color: #444;
	white-space: nowrap;
}

.sheet-tab.active {
	margin-left: 1px;
	margin-top: -1px;
	padding: 0 13px;
	background: #fff;
	color: #217346;
	border-bottom: 2px solid #217346;
}

.tab-kana {
	letter-spacing: -2px;
}

.tab-menu {
	padding: 0 13px;
}

.tab-menu .tab-kana {
	letter-spacing: -2.300px;
}

.add {
	margin-left: 33px;
}

.dots {
	width: 2px;
	height: 10px;
	margin-left: 168px;
	border-left: 2px dotted #999;
}

.hscroll {
	display: flex;
	width: 370px;
	height: 15px;
	margin-left: 16px;
	background: #fff;
	border: 1px solid #ababab;
}

.hs-btn {
	display: flex;
	align-items: center;
	justify-content: center;
	flex: none;
	width: 14px;
}

.hs-btn:last-child {
	border-left: 1px solid #ababab;
}

.hs-btn:first-child {
	border-right: 1px solid #ababab;
}

.hs-thumb {
	flex: 1;
}

/* ステータスバー */
.status {
	display: flex;
	align-items: center;
	justify-content: space-between;
	flex: 1;
	padding: 0 0 0 9px;
	background: #f1f1f1;
	color: #555;
}

.status-right {
	display: flex;
	align-items: center;
	gap: 24px;
	padding-right: 26px;
}

.zoom {
	display: flex;
	align-items: center;
	margin-left: -1px;
	gap: 3px;
}

.z-minus {
	width: 7px;
	height: 2px;
	background: #666;
}

.z-plus {
	position: relative;
	width: 8px;
	height: 2px;
	background: #666;
}

.z-plus::after {
	content: "";
	position: absolute;
	left: 3px;
	top: -3px;
	width: 2px;
	height: 8px;
	background: #666;
}

.z-track {
	position: relative;
	width: 100px;
	height: 1px;
	background: #999;
}

.z-thumb {
	position: absolute;
	left: 25px;
	top: -5px;
	width: 4px;
	height: 11px;
	background: #666;
}

.z-tick {
	position: absolute;
	left: 50px;
	top: -2px;
	width: 1px;
	height: 5px;
	background: #999;
}

.z-val {
	margin-left: -4px;
	font-size: 12px;
}

/* ドラッグ操作 */
.redbox {
	position: absolute;
	left: 172px;
	top: 556px;
	width: 187px;
	height: 45px;
	border: 4px solid #f00;
	border-radius: 9px;
}

.drop-mark {
	position: absolute;
	left: 329px;
	top: 560px;
	width: 0;
	height: 0;
	border: 4px solid transparent;
	border-top: 4px solid #000;
	border-bottom: 0;
}

.cursor {
	position: absolute;
	left: 335px;
	top: 566px;
}
```
